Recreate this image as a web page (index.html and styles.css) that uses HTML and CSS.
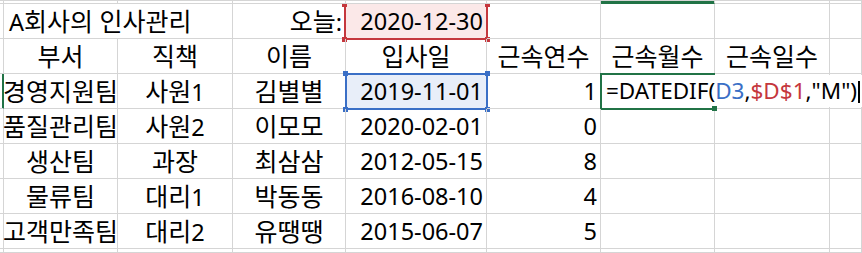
FILE: index.html
```html
<!DOCTYPE html>
<html lang="ko">
<head>
<meta charset="utf-8">
<title>A회사의 인사관리</title>
<link rel="stylesheet" href="styles.css">
</head>
<body>
<div class="sheet">
  <div class="rh hdr"></div>
  <div class="c hdr"></div>
  <div class="c hdr"></div>
  <div class="c hdr"></div>
  <div class="c hdr"></div>
  <div class="c hdr"></div>
  <div class="c hdr hdr-on"></div>
  <div class="c hdr"></div>
  <div class="c hdr"></div>

  <div class="rh"></div>
  <div class="c l span2"><span class="n">A</span>회사의 인사관리</div>
  <div class="c r">오늘<span class="n">:</span></div>
  <div class="c r num fill-red">2020-12-30<span class="hl hl-red"><i class="h tl"></i><i class="h tr"></i><i class="h bl"></i><i class="h br"></i></span></div>
  <div class="c"></div>
  <div class="c"></div>
  <div class="c"></div>
  <div class="c"></div>

  <div class="rh"></div>
  <div class="c m">부서</div>
  <div class="c m">직책</div>
  <div class="c m">이름</div>
  <div class="c m">입사일</div>
  <div class="c m">근속연수</div>
  <div class="c m">근속월수</div>
  <div class="c m">근속일수</div>
  <div class="c"></div>

  <div class="rh rh-on"></div>
  <div class="c m">경영지원팀</div>
  <div class="c m">사원<span class="n">1</span></div>
  <div class="c m">김별별</div>
  <div class="c r num fill-blue">2019-11-01<span class="hl hl-blue"><i class="h tl"></i><i class="h tr"></i><i class="h bl"></i><i class="h br"></i></span></div>
  <div class="c r num">1</div>
  <div class="c active"><span class="hl hl-green"></span><span class="fillhandle"></span><span class="editor">=DATEDIF(<span class="ref-blue">D3</span>,<span class="ref-red">$D$1</span>,"M")<span class="caret"></span></span></div>
  <div class="c"></div>
  <div class="c"></div>

  <div class="rh"></div>
  <div class="c m">품질관리팀</div>
  <div class="c m">사원<span class="n">2</span></div>
  <div class="c m">이모모</div>
  <div class="c r num">2020-02-01</div>
  <div class="c r num">0</div>
  <div class="c"></div>
  <div class="c"></div>
  <div class="c"></div>

  <div class="rh"></div>
  <div class="c m">생산팀</div>
  <div class="c m">과장</div>
  <div class="c m">최삼삼</div>
  <div class="c r num">2012-05-15</div>
  <div class="c r num">8</div>
  <div class="c"></div>
  <div class="c"></div>
  <div class="c"></div>

  <div class="rh"></div>
  <div class="c m">물류팀</div>
  <div class="c m">대리<span class="n">1</span></div>
  <div class="c m">박동동</div>
  <div class="c r num">2016-08-10</div>
  <div class="c r num">4</div>
  <div class="c"></div>
  <div class="c"></div>
  <div class="c"></div>

  <div class="rh"></div>
  <div class="c m">고객만족팀</div>
  <div class="c m">대리<span class="n">2</span></div>
  <div class="c m">유땡땡</div>
  <div class="c r num">2015-06-07</div>
  <div class="c r num">5</div>
  <div class="c"></div>
  <div class="c"></div>
  <div class="c"></div>

  <div class="rh"></div>
  <div class="c"></div>
  <div class="c"></div>
  <div class="c"></div>
  <div class="c"></div>
  <div class="c"></div>
  <div class="c"></div>
  <div class="c"></div>
  <div class="c"></div>
</div>
</body>
</html>
```

FILE: styles.css
```css
html, body {
  margin: 0;
  padding: 0;
  background: #ffffff;
  overflow: hidden;
}

.sheet {
  display: grid;
  grid-template-columns: 4px 114px 115px 113px 141px 114px 114px 115px 1fr;
  grid-template-rows: 4px repeat(7, 35px) 1fr;
  width: 862px;
  height: 253px;
  font-family: "Noto Sans", "Noto Sans CJK KR", sans-serif;
  font-size: 25px;
  color: #000000;
}

.rh,
.c {
  box-sizing: border-box;
  border-right: 1px solid #d5d5d5;
  border-bottom: 1px solid #d5d5d5;
  min-width: 0;
}

.c {
  position: relative;
  line-height: 34px;
  white-space: nowrap;
  padding: 0 3px;
}

.n,
.num {
  font-size: 23.5px;
}

.hdr {
  background: linear-gradient(#d5d5d5 1px, #ffffff 1px);
  line-height: 0;
}

.hdr-on {
  background: linear-gradient(#d5d5d5 1px, #217346 1px);
  border-bottom-color: #217346;
}

.rh-on {
  border-right-color: #217346;
  box-shadow: inset -1px 0 0 #217346;
}

.l { text-align: left; padding-left: 5px; }
.r { text-align: right; }
.m { text-align: center; padding: 0; display: flex; justify-content: center; align-items: baseline; }

.span2 { grid-column: span 2; }

.fill-red { background: #fbe8e8; }
.fill-blue { background: #e8eef9; }

.hl {
  position: absolute;
  box-sizing: border-box;
  pointer-events: none;
}

.hl-red {
  left: -2px;
  right: -2px;
  top: 0;
  bottom: -2px;
  border: 2px solid #c5373d;
  border-top: none;
}

.hl-blue {
  left: -1px;
  right: -2px;
  top: -1px;
  bottom: -2px;
  border: 2px solid #3a6fc6;
}

.hl-green {
  left: -1px;
  right: -1px;
  top: -1px;
  bottom: -2px;
  border: 2px solid #217346;
}

.h {
  position: absolute;
  width: 5px;
  height: 5px;
}

.hl-red .h { background: #c5373d; }
.hl-blue .h { background: #3a6fc6; }

.h.tl { left: -4px; top: -4px; }
.h.tr { right: -4px; top: -4px; }
.h.bl { left: -4px; bottom: -4px; }
.h.br { right: -4px; bottom: -4px; }

.hl-red .h.tl,
.hl-red .h.tr { top: 0; height: 3px; }

.fillhandle {
  position: absolute;
  right: -3px;
  bottom: -3px;
  width: 5px;
  height: 5px;
  background: #217346;
  z-index: 3;
}

.editor {
  position: absolute;
  left: 1px;
  top: 1px;
  height: 32px;
  line-height: 32px;
  padding: 0 2px 0 4px;
  background: #ffffff;
  font-size: 22.5px;
  z-index: 2;
}

.ref-blue { color: #3a6fc6; }
.ref-red { color: #c5373d; }

.caret {
  display: inline-block;
  width: 2px;
  height: 22px;
  background: #000000;
  vertical-align: -4px;
  margin-left: 1px;
}
```
